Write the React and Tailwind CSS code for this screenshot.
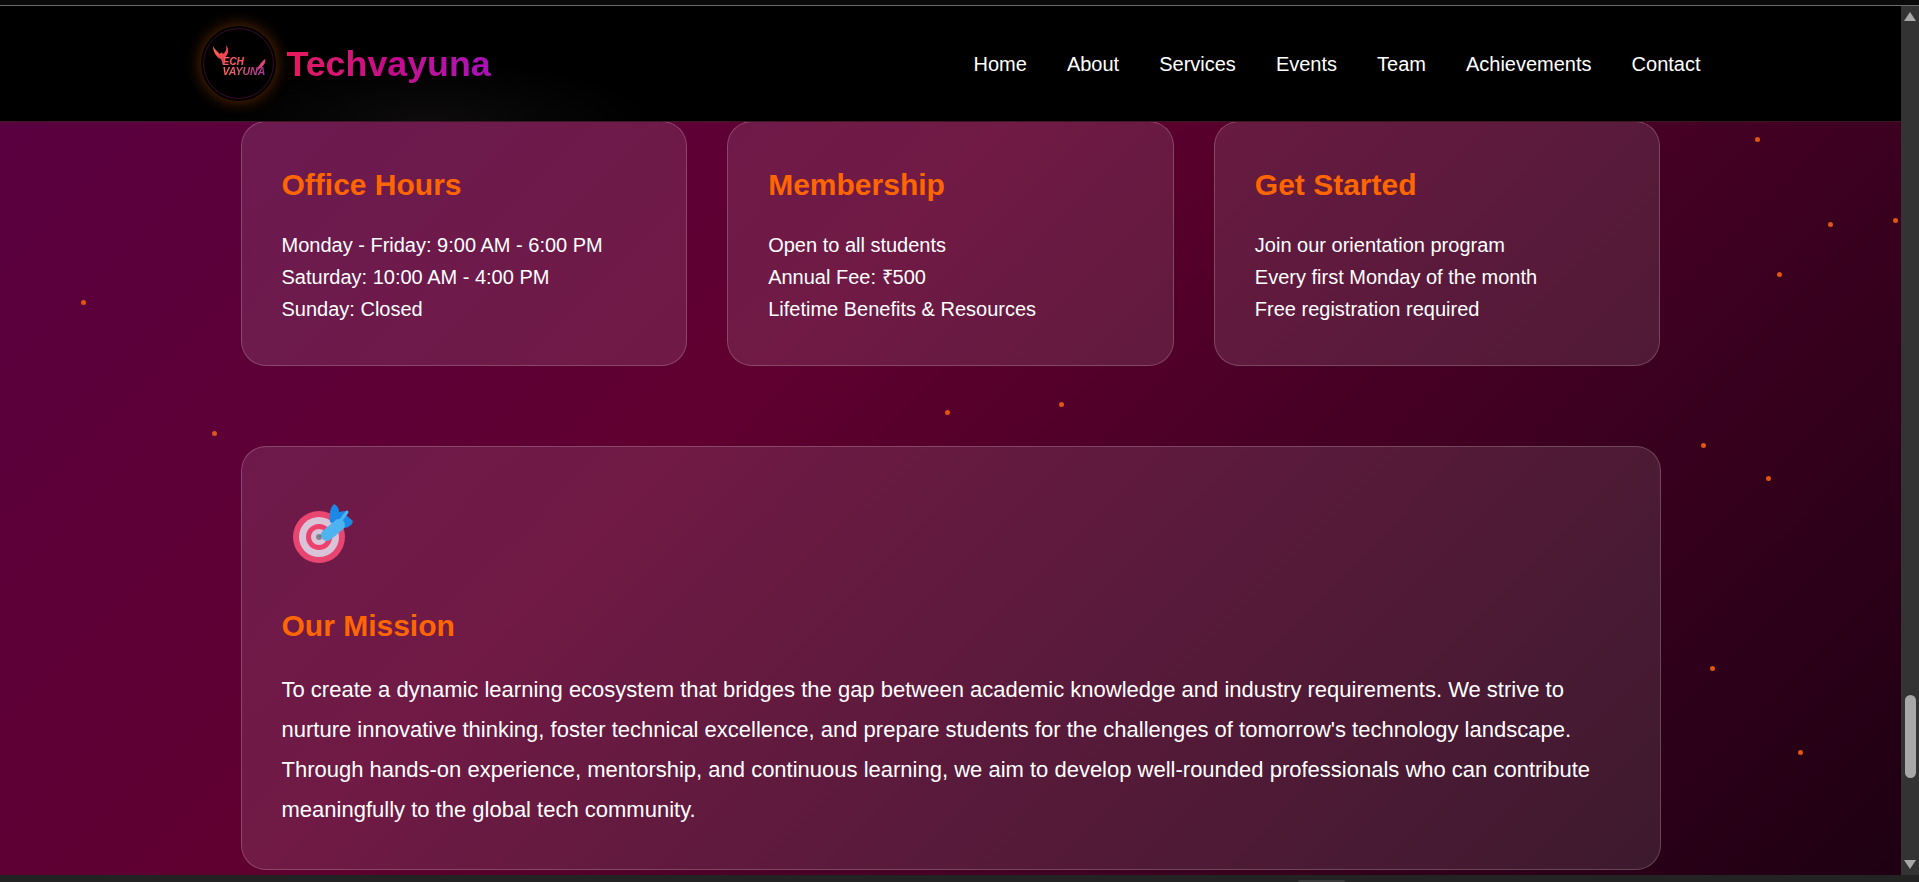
const navItems = ["Home", "About", "Services", "Events", "Team", "Achievements", "Contact"];

const cards = [
  { title: "Office Hours", lines: ["Monday - Friday: 9:00 AM - 6:00 PM", "Saturday: 10:00 AM - 4:00 PM", "Sunday: Closed"] },
  { title: "Membership", lines: ["Open to all students", "Annual Fee: ₹500", "Lifetime Benefits & Resources"] },
  { title: "Get Started", lines: ["Join our orientation program", "Every first Monday of the month", "Free registration required"] },
];

const particles = [
  [1757, 139], [1830, 224], [1895, 220], [1779, 274], [83, 302], [214, 433],
  [947, 412], [1061, 404], [1703, 445], [1768, 478], [1712, 668], [1800, 752],
];

function Logo() {
  return (
    <div className="relative flex h-[75px] w-[75px] items-center justify-center rounded-full bg-black shadow-[0_0_16px_rgba(255,110,0,0.4)]">
      <div className="absolute inset-[2px] rounded-full border border-[#3a0c28]" />
      <svg viewBox="0 0 30 30" className="absolute left-[9px] top-[18px] h-[30px] w-[30px]">
        <defs>
          <linearGradient id="ph" x1="0" y1="0" x2="1" y2="1">
            <stop offset="0" stopColor="#ff7a45" />
            <stop offset="1" stopColor="#e81e63" />
          </linearGradient>
        </defs>
        <path d="M3 2 C5 6 8 8 10 10 C11 8 12 8 13 10 C16 8 17 5 16 1 C20 6 18 12 14 14 L13 21 L11 15 C7 14 3 8 3 2 Z" fill="url(#ph)" />
      </svg>
      <svg viewBox="0 0 12 16" className="absolute left-[56px] top-[33px] h-[12px] w-[9px]">
        <path d="M11 0 C12 6 8 10 2 14 L1 16 L0 14 C3 8 6 3 11 0 Z" fill="#e0457a" />
      </svg>
      <span className="absolute left-[22px] top-[30px] text-[10px] font-bold italic leading-[11px] text-[#f4606a]">ECH</span>
      <span className="absolute left-[22px] top-[40px] bg-gradient-to-r from-[#ff6a50] to-[#a8309a] bg-clip-text text-[10.5px] font-bold italic leading-[11px] text-transparent">VAYUNA</span>
    </div>
  );
}

function Dart() {
  return (
    <svg viewBox="0 0 64 64" className="h-[64px] w-[64px]">
      <defs>
        <filter id="soft"><feGaussianBlur stdDeviation="0.6" /></filter>
      </defs>
      <g filter="url(#soft)">
        <circle cx="27" cy="37" r="26" fill="#e8456f" />
        <circle cx="27" cy="37" r="20" fill="#d9c3d8" />
        <circle cx="27" cy="37" r="13" fill="#ee3f6c" />
        <circle cx="27" cy="37" r="8" fill="#d9c3d8" />
        <circle cx="27" cy="37" r="3" fill="#8b8391" />
        <path d="M27 37 L38 29" stroke="#777" strokeWidth="2" />
        <path d="M42 4 C46 6 47 9 47 12 L53 11 L55 16 L61 21 L60 24 C56 29 50 28 46 27 L38 22 C37 14 38 8 42 4 Z" fill="#1e88e5" />
        <path d="M35 35 L47 25" stroke="#4fb3f0" strokeWidth="12" strokeLinecap="round" />
        <path d="M46 24 L55 12" stroke="#4fb3f0" strokeWidth="3" strokeLinecap="round" />
      </g>
    </svg>
  );
}

function Scrollbar() {
  return (
    <div className="flex w-[18px] flex-col items-center bg-[#333333]">
      <div className="mt-[6px] h-0 w-0 border-x-[6.5px] border-b-[9px] border-x-transparent border-b-[#a8a8a8]" />
      <div className="mt-[674px] h-[83px] w-[11px] rounded-[6px] bg-[#a8a8a8]" />
      <div className="mt-[82px] h-0 w-0 border-x-[6.5px] border-t-[9px] border-x-transparent border-t-[#a8a8a8]" />
    </div>
  );
}

export default function App() {
  return (
    <div className="flex h-[882px] w-[1919px] flex-col overflow-hidden bg-black font-['Liberation_Sans',Arial,sans-serif] text-white">
      <div className="h-[5px] bg-[#0a0a0a]" />
      <div className="h-px bg-[#6a6a6a]" />
      <div className="flex min-h-0 flex-1">
        <div className="flex min-w-0 flex-1 flex-col">
          <nav className="h-[116px] shrink-0 border-b border-[#3a1a20] bg-[radial-gradient(ellipse_220px_60px_at_430px_115px,#0d0b0b,#000000)]">
            <div className="mx-auto flex h-full w-[1500px] items-center justify-between">
              <div className="flex items-center gap-[11px]">
                <Logo />
                <span className="bg-gradient-to-r from-[#e6195a] via-[#c8088c] to-[#a80fb8] bg-clip-text text-[35.8px] font-bold leading-[40px] text-transparent">Techvayuna</span>
              </div>
              <ul className="flex gap-10 text-[20px]">
                {navItems.map((n) => (
                  <li key={n}>{n}</li>
                ))}
              </ul>
            </div>
          </nav>
          <main className="relative flex min-h-0 flex-1 flex-col justify-end overflow-hidden bg-[linear-gradient(135deg,#5a0040_0%,#600030_38%,#1e0012_100%)] pb-[5px]">
            {particles.map(([x, y]) => (
              <span
                key={`${x}-${y}`}
                className="absolute h-[5px] w-[5px] rounded-full bg-[#e05510]"
                style={{ left: x - 2, top: y - 2 - 122 }}
              />
            ))}
            <div className="relative mx-auto w-[1500px] shrink-0 px-10">
              <div className="grid grid-cols-3 gap-10">
                {cards.map((c) => (
                  <div key={c.title} className="rounded-[25px] border border-white/20 bg-white/10 p-10">
                    <h3 className="mb-[21px] text-[30px] font-bold leading-[46px] text-[#ff6600]">{c.title}</h3>
                    <div className="text-[20px] leading-[32px]">
                      {c.lines.map((l) => (
                        <p key={l}>{l}</p>
                      ))}
                    </div>
                  </div>
                ))}
              </div>
              <div className="mt-20 rounded-[25px] border border-white/20 bg-white/10 px-10 pb-[39px] pt-[27px]">
                <div className="flex h-[90px] items-end pl-[10px]">
                  <Dart />
                </div>
                <h3 className="mb-[21px] mt-[39px] text-[30px] font-bold leading-[46px] text-[#ff6600]">Our Mission</h3>
                <p className="text-[22px] leading-[40px]">
                  To create a dynamic learning ecosystem that bridges the gap between academic knowledge and industry requirements. We strive to nurture innovative thinking, foster technical excellence, and prepare students for the challenges of tomorrow's technology landscape. Through hands-on experience, mentorship, and continuous learning, we aim to develop well-rounded professionals who can contribute meaningfully to the global tech community.
                </p>
              </div>
            </div>
          </main>
        </div>
        <Scrollbar />
      </div>
      <div className="relative h-[7px] bg-[#232323]">
        <div className="absolute left-[1298px] top-[5px] h-[2px] w-[47px] rounded-t bg-[#3a3a3a]" />
      </div>
    </div>
  );
}
